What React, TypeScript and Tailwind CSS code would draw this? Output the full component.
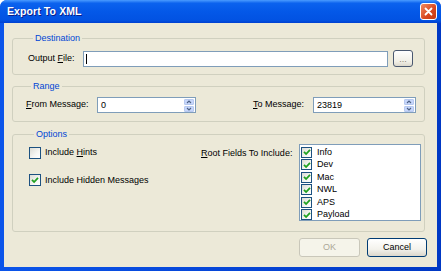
import React from 'react';

const Check: React.FC<{ checked?: boolean; size?: number }> = ({ checked, size = 12 }) => (
  <span
    className={`flex items-center justify-center border border-[#1c5180] bg-[linear-gradient(135deg,#dcdcd4,#f6f6f3_60%,#ffffff)] shrink-0 ${
      size === 12 ? 'w-[12px] h-[12px]' : 'w-[11px] h-[11px]'
    }`}
  >
    {checked && (
      <svg width="8" height="8" viewBox="0 0 8 8">
        <path d="M1 3.8 L3.1 6 L7 1.8" fill="none" stroke="#21a121" strokeWidth="1.8" />
      </svg>
    )}
  </span>
);

const Group: React.FC<{ title: string; className?: string; children: React.ReactNode }> = ({
  title,
  className = '',
  children,
}) => (
  <fieldset className={`border border-[#d0d0bf] rounded-[3px] mr-[12px] ${className}`}>
    <legend className="ml-[5px] px-[2px] text-[#0046d5] leading-[13px]">{title}</legend>
    {children}
  </fieldset>
);

const Spin: React.FC<{ value: string; width: string }> = ({ value, width }) => (
  <div className={`${width} h-[16px] flex items-center border border-[#7f9db9] bg-white pl-[3px] pr-[1px]`}>
    <span className="flex-1 text-black leading-[12px]">{value}</span>
    <div className="flex flex-col gap-px w-[10px]">
      {[0, 1].map((i) => (
        <span
          key={i}
          className="h-[6px] flex items-center justify-center rounded-[1px] bg-[#c6d6fa] border border-[#b7c9f0]"
        >
          <svg width="6" height="4" viewBox="0 0 6 4">
            <path
              d={i === 0 ? 'M1 3 L3 1 L5 3' : 'M1 1 L3 3 L5 1'}
              fill="none"
              stroke="#4d6185"
              strokeWidth="1.1"
            />
          </svg>
        </span>
      ))}
    </div>
  </div>
);

const fields = ['Info', 'Dev', 'Mac', 'NWL', 'APS', 'Payload'];

export default function App() {
  return (
    <div className="w-[441px] h-[271px] flex flex-col bg-[linear-gradient(90deg,#0b55ea,#0646d8_50%,#0038c4)] rounded-t-[7px] overflow-hidden font-['Liberation_Sans',Arial,sans-serif] text-[9px] text-black">
      <div className="h-[23px] flex items-center pl-[7px] pr-[4px] bg-[linear-gradient(#4a9bff_0%,#0b62ee_14%,#0458e8_50%,#0252e2_88%,#0040d0_100%)]">
        <span className="text-white font-bold text-[10.5px] tracking-[0.1px] [text-shadow:1px_1px_0_#0a1e8a]">
          Export To XML
        </span>
        <span className="ml-auto w-[17px] h-[17px] rounded-[3px] border border-white bg-[linear-gradient(135deg,#f08a62,#d8461e_60%,#c73a14)] flex items-center justify-center">
          <svg width="9" height="9" viewBox="0 0 9 9">
            <path d="M1.5 1.5 L7.5 7.5 M7.5 1.5 L1.5 7.5" stroke="white" strokeWidth="1.8" strokeLinecap="round" />
          </svg>
        </span>
      </div>

      <div className="flex-1 mx-[4px] mb-[4px] bg-[#ece9d8] flex flex-col pl-[8px] pt-[9px]">
        <Group title="Destination" className="pl-[15px] pr-[11px] pb-[7px]">
          <div className="flex items-center mt-[5px]">
            <span className="w-[55px]">
              Output <span className="underline">F</span>ile:
            </span>
            <div className="flex-1 h-[16px] border border-[#7f9db9] bg-white flex items-center pl-[2px]">
              <span className="w-px h-[10px] bg-black" />
            </div>
            <span className="ml-[5px] w-[20px] h-[17px] rounded-[3px] border border-[#4a5870] bg-[linear-gradient(#ffffff,#f1efe6_70%,#dcd8cc)] flex items-end justify-center pb-[3px] text-[#8a7f70] leading-[8px]">
              ...
            </span>
          </div>
        </Group>

        <Group title="Range" className="mt-[5px] pl-[13px] pr-[8px] pb-[8px]">
          <div className="flex items-center justify-between mt-[4px]">
            <div className="flex items-center">
              <span className="w-[71px]">
                <span className="underline">F</span>rom Message:
              </span>
              <Spin value="0" width="w-[99px]" />
            </div>
            <div className="flex items-center">
              <span className="w-[60px]">
                <span className="underline">T</span>o Message:
              </span>
              <Spin value="23819" width="w-[103px]" />
            </div>
          </div>
        </Group>

        <Group title="Options" className="mt-[6px] pl-[16px] pb-[10px]">
          <div className="flex mt-[3px]">
            <div className="w-[172px] flex flex-col">
              <label className="flex items-center gap-[4px] mt-[2px]">
                <Check />
                <span>
                  Include <span className="underline">H</span>ints
                </span>
              </label>
              <label className="flex items-center gap-[4px] mt-[14px]">
                <Check checked />
                <span>Include Hidden Messages</span>
              </label>
            </div>
            <div className="w-[98px] pt-[3px]">
              <span className="underline">R</span>oot Fields To Include:
            </div>
            <div className="w-[122px] h-[77px] border border-[#7f9db9] bg-white pt-[1px] pl-[1px]">
              {fields.map((f) => (
                <div key={f} className="h-[12.5px] flex items-center gap-[5px]">
                  <Check checked size={11} />
                  <span>{f}</span>
                </div>
              ))}
            </div>
          </div>
        </Group>

        <div className="flex justify-end gap-[7px] mr-[10px] mt-[6px]">
          <span className="w-[61px] h-[19px] rounded-[3px] border border-[#c9c7ba] bg-[#f5f4ea] flex items-center justify-center text-[#aca899]">
            OK
          </span>
          <span className="w-[60px] h-[19px] rounded-[3px] border border-[#003c74] bg-[linear-gradient(#ffffff,#f3f2ec_60%,#dcd7cb)] flex items-center justify-center">
            Cancel
          </span>
        </div>
      </div>
    </div>
  );
}
